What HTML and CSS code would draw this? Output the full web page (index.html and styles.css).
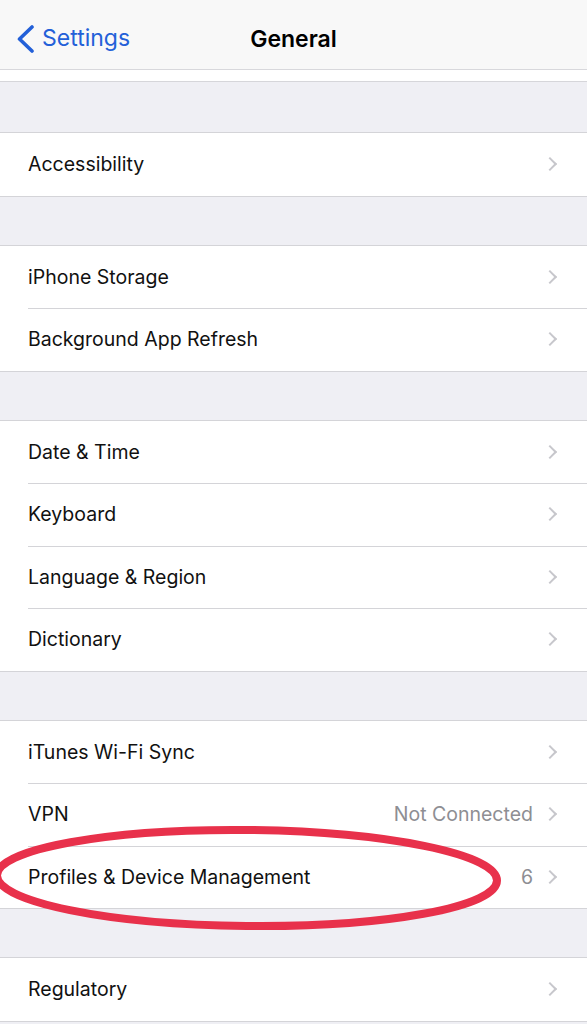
FILE: index.html
```html
<!DOCTYPE html>
<html>
<head>
<meta charset="utf-8">
<link rel="stylesheet" href="styles.css">
</head>
<body>
<div class="screen">
  <div class="topmark"></div>
  <header class="nav">
    <div class="back">
      <svg class="back-chev" width="19" height="28" viewBox="0 0 19 28"><path d="M16 2 L3.5 14 L16 26" fill="none" stroke="#2360d8" stroke-width="3.6" stroke-linecap="round" stroke-linejoin="round"/></svg>
      <span>Settings</span>
    </div>
    <div class="title">General</div>
  </header>
  <div class="strip"></div>
  <div class="gap first"></div>
  <div class="group">
    <div class="row"><span class="label">Accessibility</span><span class="chev"></span></div>
  </div>
  <div class="gap"></div>
  <div class="group">
    <div class="row"><span class="label">iPhone Storage</span><span class="chev"></span></div>
    <div class="row"><span class="label">Background App Refresh</span><span class="chev"></span></div>
  </div>
  <div class="gap"></div>
  <div class="group">
    <div class="row"><span class="label">Date &amp; Time</span><span class="chev"></span></div>
    <div class="row"><span class="label">Keyboard</span><span class="chev"></span></div>
    <div class="row"><span class="label">Language &amp; Region</span><span class="chev"></span></div>
    <div class="row"><span class="label">Dictionary</span><span class="chev"></span></div>
  </div>
  <div class="gap"></div>
  <div class="group">
    <div class="row"><span class="label">iTunes Wi-Fi Sync</span><span class="chev"></span></div>
    <div class="row"><span class="label">VPN</span><span class="value">Not Connected</span><span class="chev"></span></div>
    <div class="row"><span class="label">Profiles &amp; Device Management</span><span class="value">6</span><span class="chev"></span></div>
  </div>
  <div class="gap"></div>
  <div class="group">
    <div class="row"><span class="label">Regulatory</span><span class="chev"></span></div>
  </div>
  <svg class="circle" width="587" height="120" viewBox="0 0 587 120"><ellipse cx="247" cy="56" rx="250" ry="48" fill="none" stroke="#e8314b" stroke-width="8" transform="rotate(0.6 247 56)"/></svg>
</div>
</body>
</html>
```
FILE: styles.css
```css
* { box-sizing: border-box; }
html, body { margin: 0; padding: 0; }
body {
  width: 587px;
  height: 1024px;
  overflow: hidden;
  background: #efeff4;
  font-family: "Inter", "Roboto", "Liberation Sans", sans-serif;
  -webkit-font-smoothing: antialiased;
}
.screen { position: relative; width: 587px; height: 1024px; background: #efeff4; }
.topmark {
  position: absolute; left: 485px; top: 0; width: 18px; height: 2px; background: #9a9a9a;
}
.nav {
  height: 70px;
  background: #f8f8f8;
  border-bottom: 1px solid #d8d8dc;
  display: flex;
  align-items: center;
  position: relative;
}
.back {
  display: flex;
  align-items: center;
  gap: 7px;
  padding-left: 16px;
  color: #2360d8;
  font-size: 23px;
  margin-top: 8px;
}
.back span { margin-top: -2px; }
.back-chev { display: block; }
.title {
  position: absolute;
  left: 0; right: 0;
  text-align: center;
  font-size: 23px;
  font-weight: 600;
  color: #000;
  top: 25px;
  pointer-events: none;
}
.strip {
  height: 12px;
  background: #fff;
  border-bottom: 1px solid #d6d6da;
}
.gap { height: 48px; }
.gap.first { height: 50px; }
.group {
  background: #fff;
  border-top: 1px solid #d4d4d8;
  border-bottom: 1px solid #d4d4d8;
}
.row {
  height: 62.5px;
  display: flex;
  align-items: center;
  padding-left: 28px;
  padding-right: 30px;
  font-size: 19.5px;
  color: #111;
  position: relative;
}
.row + .row::before {
  content: "";
  position: absolute;
  left: 28px; right: 0; top: 0;
  border-top: 1px solid #d4d4d8;
}
.label { flex: 1; }
.value { color: #8e8e93; margin-right: 12px; }
.chev {
  width: 10px; height: 10px;
  border-top: 2px solid #c7c7cc;
  border-right: 2px solid #c7c7cc;
  transform: rotate(45deg);
  margin-right: 2px;
}
.circle {
  position: absolute;
  left: 0;
  top: 822px;
  pointer-events: none;
}
```
